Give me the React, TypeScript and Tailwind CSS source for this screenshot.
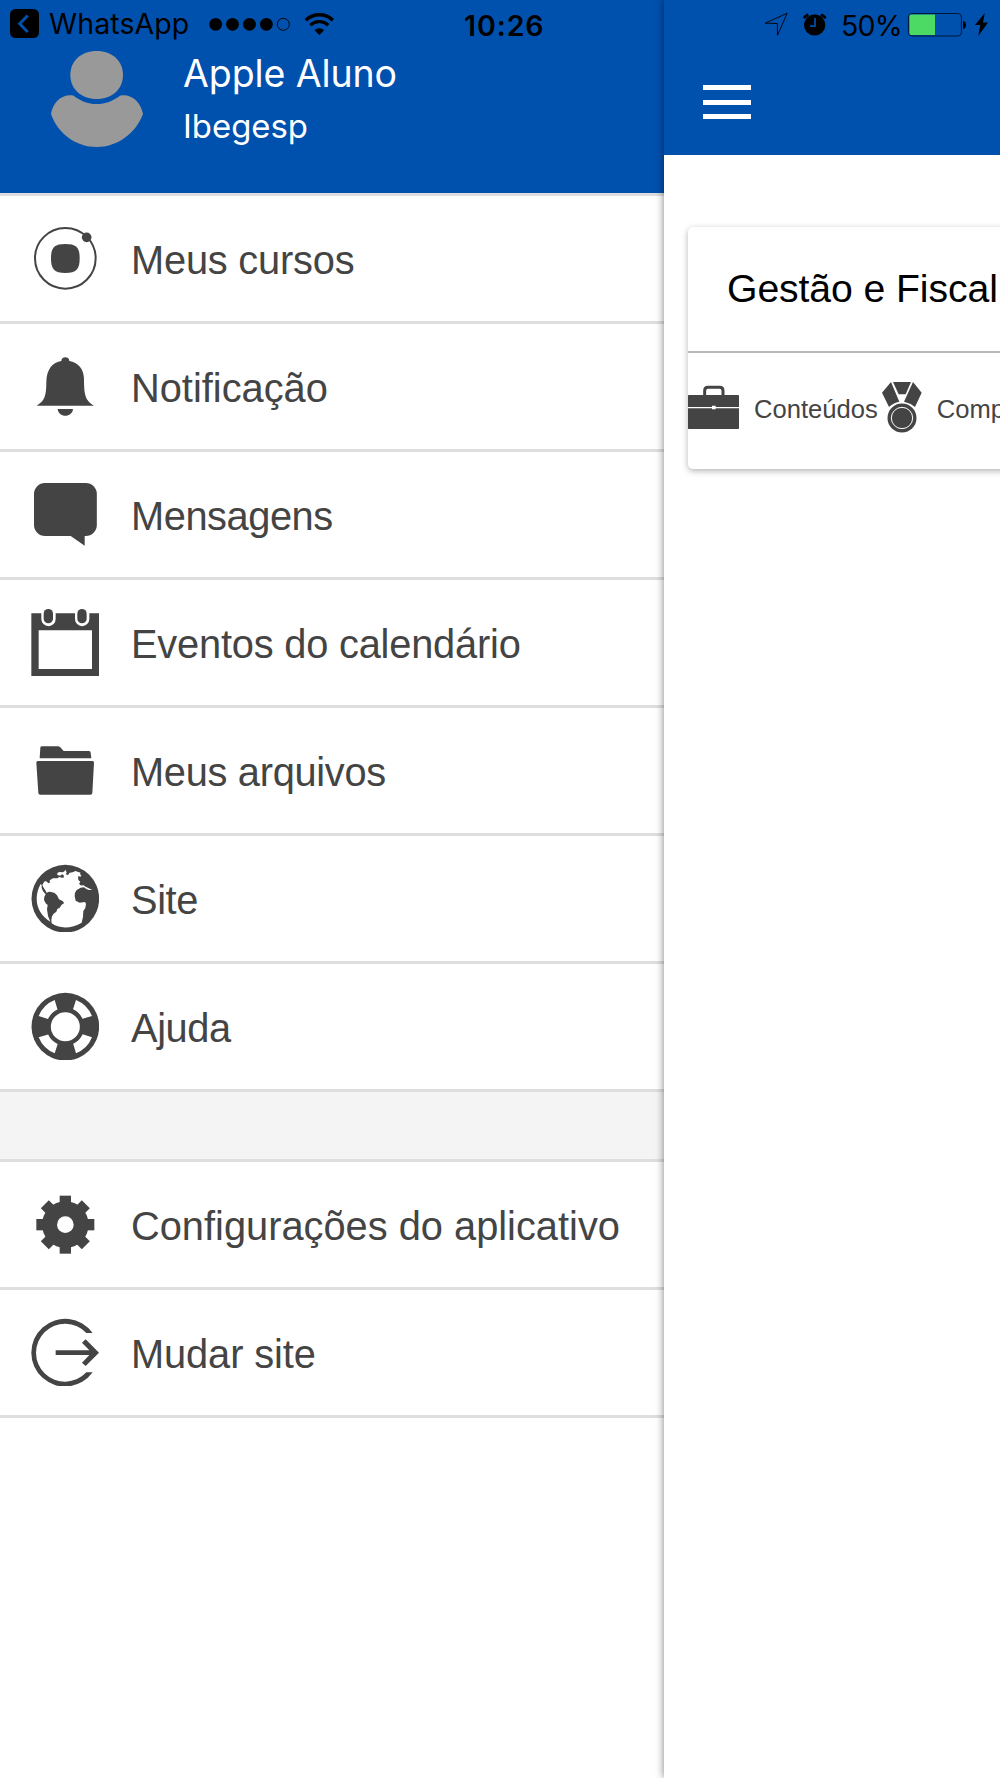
import React from 'react';

type IconProps = {
  viewBox: string;
  children: React.ReactNode;
};

const MenuIcon: React.FC<IconProps> = ({ viewBox, children }) => (
  <svg className="-mt-px h-[68px] w-[68px] shrink-0 fill-[#444]" viewBox={viewBox} aria-hidden="true">
    {children}
  </svg>
);

const CoursesIcon = () => (
  <MenuIcon viewBox="93 102 204 204">
    <circle cx="196" cy="205" r="91" fill="none" stroke="#444" strokeWidth="6" />
    <circle cx="260" cy="142" r="14.500" />
    <path d="M196 162C229 162 239 172 239 205C239 239 229 249 196 249C163 249 153 239 153 205C153 172 163 162 196 162Z" />
  </MenuIcon>
);

const BellIcon = () => (
  <MenuIcon viewBox="93 486 204 204">
    <path d="M196 502Q207 502 208 513C234 517 252 537 252 568C252 618 257 632 282 647H110C134 632 139 618 139 575C140 537 158 517 184 513Q185 502 196 502Z" />
    <path d="M173 657H219C217 684 175 684 173 657Z" />
  </MenuIcon>
);

const ChatIcon = () => (
  <MenuIcon viewBox="93 90 204 204">
    <rect x="102" y="99" width="188.500" height="159" rx="33" />
    <path d="M211 257L254 287V255Z" />
  </MenuIcon>
);

const CalendarIcon = () => (
  <MenuIcon viewBox="93 474 204 204">
    <path fillRule="evenodd" d="M94 490H297V679H94ZM116 541V657H276V541Z" />
    <path className="fill-white" d="M124 488H167V507A21.500 21.500 0 0 1 124 507ZM225 488H268V507A21.500 21.500 0 0 1 225 507Z" />
    <rect x="131" y="477" width="28" height="43" rx="14" />
    <rect x="232" y="477" width="28" height="43" rx="14" />
  </MenuIcon>
);

const FolderIcon = () => (
  <MenuIcon viewBox="93 108 204 204">
    <path d="M121 143Q121 139 126 139H174Q178 139 181 142L191 153H267Q272 153 272 158L274 175H119Z" />
    <path d="M113 183H278Q282 183 282 188L277 279Q277 284 271 284H121Q115 284 115 279L109 188Q109 183 113 183Z" />
  </MenuIcon>
);

const GlobeIcon = () => (
  <MenuIcon viewBox="93 492 204 204">
    <circle cx="196" cy="596" r="101.500" />
    <g className="fill-white" transform="translate(81 480)">
      <path d="M41 72L44 75L44 84L48 94L56 103L52 110L51 120L56 130L62 135L60 148L63 168L70 185C46 171 29 146 29 116C29 100 34 84 41 72Z" />
      <path d="M46 74L53 64L58 64L64 70L69 67L68 61L78 55L92 55L96 51L109 54L111 47L106 43L99 47L91 45L91 39L97 36L108 37L113 33L116 29L119 38L116 43L123 45L128 38L137 37L145 33L154 36L161 38L159 42L163 47L160 53L154 55L155 61L160 64L157 72L168 75L176 80L184 84L194 89L198 90L186 90L178 87L171 82L161 83L149 90L144 98L143 109L146 122L158 128L174 126L177 131L175 144L169 153L168 170L164 188C136 206 95 207 74 190L73 180L75 169L80 161L88 155L91 147L98 143L104 134L111 130L108 124L96 118L90 106L83 99L73 96L66 95L59 98L54 89L49 82Z" />
    </g>
    <path d="M234 529L246 530L249 538L244 545L238 543L235 537ZM238 549L247 550L248 557L240 555Z" />
  </MenuIcon>
);

const SPOKES = [0, 90, 180, 270];

const HelpIcon = () => (
  <MenuIcon viewBox="93 126 204 204">
    <circle cx="196" cy="230" r="101.500" />
    <circle className="fill-white" cx="196" cy="230" r="43.500" />
    {SPOKES.map((angle) => (
      <path
        key={angle}
        className="fill-white"
        transform={`rotate(${angle} 196 230)`}
        d="M164 150A87 87 0 0 0 116 198L144 207A58 58 0 0 1 172.500 178.500Z"
      />
    ))}
  </MenuIcon>
);

const TEETH = [0, 45, 90, 135];

const GearIcon = () => (
  <MenuIcon viewBox="93 120 204 204">
    <circle cx="196" cy="224" r="70" />
    {TEETH.map((angle) => (
      <rect
        key={angle}
        x="179"
        y="137"
        width="34"
        height="174"
        transform={`rotate(${angle} 196 224)`}
      />
    ))}
    <circle className="fill-white" cx="196" cy="224" r="25" />
  </MenuIcon>
);

const LogOutIcon = () => (
  <MenuIcon viewBox="93 504 204 204">
    <path d="M278 549A101.500 101.500 0 1 0 278 667H259A87 87 0 1 1 259 549Z" />
    <path d="M167 601H268L246 578L257 568L297 608L257 648L246 638L268 615H167Z" />
  </MenuIcon>
);

const BriefcaseIcon = () => (
  <svg className="mt-[32px] h-[45px] w-[51px] shrink-0 fill-[#444]" viewBox="84 525 153 135" aria-hidden="true">
    <path d="M134 556V542Q134 532 144 532H179Q189 532 189 542V556" fill="none" stroke="#444" strokeWidth="9" />
    <rect x="84" y="555" width="153" height="102" rx="2" />
    <path className="fill-white" d="M84 591H156V587H167V591H237V595H167V598H156V595H84Z" />
  </svg>
);

const MedalIcon = () => (
  <svg className="mt-[28px] ml-[4px] h-[52px] w-[40px] shrink-0 fill-[#444]" viewBox="667 514 120 156" aria-hidden="true">
    <path d="M694 517L667 549L688 592Q700 580 719 576Z" />
    <path d="M760 517L786 549L766 592Q752 580 733 576Z" />
    <path d="M700 517H754L738 554H717Z" />
    <circle cx="727" cy="625" r="43.500" />
    <circle cx="727" cy="625" r="32" fill="none" stroke="#fff" strokeWidth="3" />
  </svg>
);

const AvatarIcon = () => (
  <svg className="mt-[51px] ml-[51px] h-[97px] w-[92px] shrink-0 fill-[#999]" viewBox="153 153 276 291" aria-hidden="true">
    <path d="M290 153C337 153 369 183 369 225C369 267 337 297 290 297C243 297 211 267 211 225C211 183 243 153 290 153Z" />
    <path d="M153 342C159 306 186 281 221 287C243 303 263 312 290 312C317 312 337 303 360 287C395 281 422 306 429 342C407 401 352 441 290 441C228 441 173 401 153 342Z" />
  </svg>
);

type MenuItem = {
  label: string;
  Icon: React.FC;
  tracking: string;
};

const mainItems: MenuItem[] = [
  { label: 'Meus cursos', Icon: CoursesIcon, tracking: 'tracking-[-0.2px]' },
  { label: 'Notificação', Icon: BellIcon, tracking: 'tracking-normal' },
  { label: 'Mensagens', Icon: ChatIcon, tracking: 'tracking-[-0.45px]' },
  { label: 'Eventos do calendário', Icon: CalendarIcon, tracking: 'tracking-[-0.2px]' },
  { label: 'Meus arquivos', Icon: FolderIcon, tracking: 'tracking-[-0.3px]' },
  { label: 'Site', Icon: GlobeIcon, tracking: 'tracking-[-0.4px]' },
  { label: 'Ajuda', Icon: HelpIcon, tracking: 'tracking-[-0.4px]' },
];

const appItems: MenuItem[] = [
  { label: 'Configurações do aplicativo', Icon: GearIcon, tracking: 'tracking-normal' },
  { label: 'Mudar site', Icon: LogOutIcon, tracking: 'tracking-[-0.1px]' },
];

const MenuRow: React.FC<MenuItem> = ({ label, Icon, tracking }) => (
  <li className="flex h-32 items-center border-b-3 border-[#dedede] pl-[31px]">
    <Icon />
    <span className={`ml-8 pt-1 text-[39.8px] leading-none whitespace-nowrap text-[#444] ${tracking}`}>
      {label}
    </span>
  </li>
);

const StatusBar = () => (
  <div className="absolute inset-x-0 top-0 z-20 flex h-12 items-start font-[Inter,sans-serif] text-black">
    <svg className="mt-[9px] ml-[10px] h-[29px] w-[29px]" viewBox="0 0 29 29">
      <rect width="29" height="29" rx="5.500" />
      <path d="M17.700 6.500L9.700 14.700L17.700 23" fill="none" stroke="#0050ae" strokeWidth="3" />
    </svg>
    <span className="mt-[9px] ml-[10px] w-[151px] text-[28.500px] leading-[29px] tracking-[0.1px]">WhatsApp</span>
    <svg className="mt-[17px] ml-[9px] h-[15px] w-[82px]" viewBox="0 0 82 15">
      <circle cx="6.700" cy="7.300" r="6.400" />
      <circle cx="23.500" cy="7.300" r="6.400" />
      <circle cx="40.500" cy="7.300" r="6.400" />
      <circle cx="57.400" cy="7.300" r="6.400" />
      <circle cx="74.300" cy="7.300" r="6" fill="none" stroke="#000" strokeWidth="0.900" />
    </svg>
    <svg className="mt-[12px] ml-[13px] h-[24px] w-[31px]" viewBox="0 0 31 24" fill="none" stroke="#000">
      <path d="M1.800 8.200A19.500 19.500 0 0 1 28.800 8.200" strokeWidth="3.600" />
      <path d="M6.400 13.200A12.800 12.800 0 0 1 24.200 13.200" strokeWidth="3.400" />
      <path d="M10.500 18.200A6.600 6.600 0 0 1 20.100 18.200L15.300 23Z" fill="#000" stroke="none" />
    </svg>
    <span className="mt-[11px] ml-[129px] w-[89px] text-[28.500px] leading-[29px] font-semibold tracking-[0.9px]">10:26</span>
    <svg className="mt-[12px] ml-[211px] h-[25px] w-[26px]" viewBox="0 0 26 25" fill="none" stroke="#000" strokeWidth="0.900">
      <path d="M23.200 1.200L1.200 11.200L13.300 11.500L13.500 23.300Z" />
    </svg>
    <svg className="mt-[13px] ml-[12px] h-[24px] w-[25px]" viewBox="0 0 25 24">
      <circle cx="12.700" cy="12" r="10.600" />
      <path d="M1.800 5.200A15 15 0 0 1 6.300 1.500" fill="none" stroke="#000" strokeWidth="2.800" />
      <path d="M19 1.500A15 15 0 0 1 23.600 5.200" fill="none" stroke="#000" strokeWidth="2.800" />
      <path d="M13 5V13.200H8" fill="none" stroke="#0050ae" strokeWidth="1.700" />
    </svg>
    <span className="mt-[11px] ml-[14px] w-[60px] text-[28.500px] leading-[29px] tracking-[-0.8px]">50%</span>
    <svg className="mt-[12px] ml-[6px] h-[26px] w-[61px]" viewBox="0 0 61 26">
      <rect x="1.400" y="1.500" width="53" height="22.500" rx="3.500" fill="none" stroke="#00193a" strokeWidth="1" />
      <path d="M4 2.500H28V23H4Q2.400 23 2.400 21V4.500Q2.400 2.500 4 2.500Z" fill="#4cd964" />
      <path d="M56 9Q59 9.500 59 13Q59 16.500 56 17Z" />
    </svg>
    <svg className="mt-[12px] ml-[6px] h-[25px] w-[15px]" viewBox="0 0 15 25">
      <path d="M10.800 1L1 13H6.300L4.300 24L14 10.600H9Z" />
    </svg>
  </div>
);

const App: React.FC = () => (
  <div className="relative flex h-[1778px] w-[1000px] overflow-hidden bg-white font-['Liberation_Sans',Arial,sans-serif]">
    <StatusBar />

    <nav className="w-[664px] shrink-0">
      <header className="flex h-[196px] border-b-3 border-[#dedede] bg-[#0050ae]">
        <AvatarIcon />
        <div className="ml-10 font-[Inter,sans-serif] text-white">
          <p className="mt-[51px] text-[37.500px] leading-[46px] tracking-[-0.1px]">Apple Aluno</p>
          <p className="mt-[9px] text-[32.900px] leading-[41px]">Ibegesp</p>
        </div>
      </header>
      <ul>
        {mainItems.map((item) => (
          <MenuRow key={item.label} {...item} />
        ))}
        <li className="h-[70px] border-b-3 border-[#dedede] bg-[#f4f4f4]" />
        {appItems.map((item) => (
          <MenuRow key={item.label} {...item} />
        ))}
      </ul>
    </nav>

    <main className="z-10 w-[336px] shrink-0 bg-white shadow-[0_0_8px_rgba(0,0,0,0.5)]">
      <header className="h-[154.500px] bg-[#0050ae] pt-[85px] pl-[39px]">
        <button className="flex w-[48px] flex-col gap-[9.500px]" aria-label="Menu">
          <span className="h-[5px] w-full bg-white" />
          <span className="h-[5px] w-full bg-white" />
          <span className="h-[5px] w-full bg-white" />
        </button>
      </header>

      <section className="mt-[72.500px] ml-6 h-[242px] w-[400px] rounded-[5px] bg-white shadow-[0_2px_6px_rgba(0,0,0,0.3)]">
        <h2 className="h-[126px] border-b-2 border-[#b9bbba] pt-10 pl-[39px] text-[39.200px] leading-[44px] tracking-[-0.1px] whitespace-nowrap text-black">
          Gestão e Fiscal
        </h2>
        <div className="flex items-start text-[25.600px] leading-[30px] text-[#444]">
          <BriefcaseIcon />
          <span className="mt-[41px] ml-[15px]">Conteúdos</span>
          <MedalIcon />
          <span className="mt-[41px] ml-[15px]">Comp</span>
        </div>
      </section>
    </main>
  </div>
);

export default App;
